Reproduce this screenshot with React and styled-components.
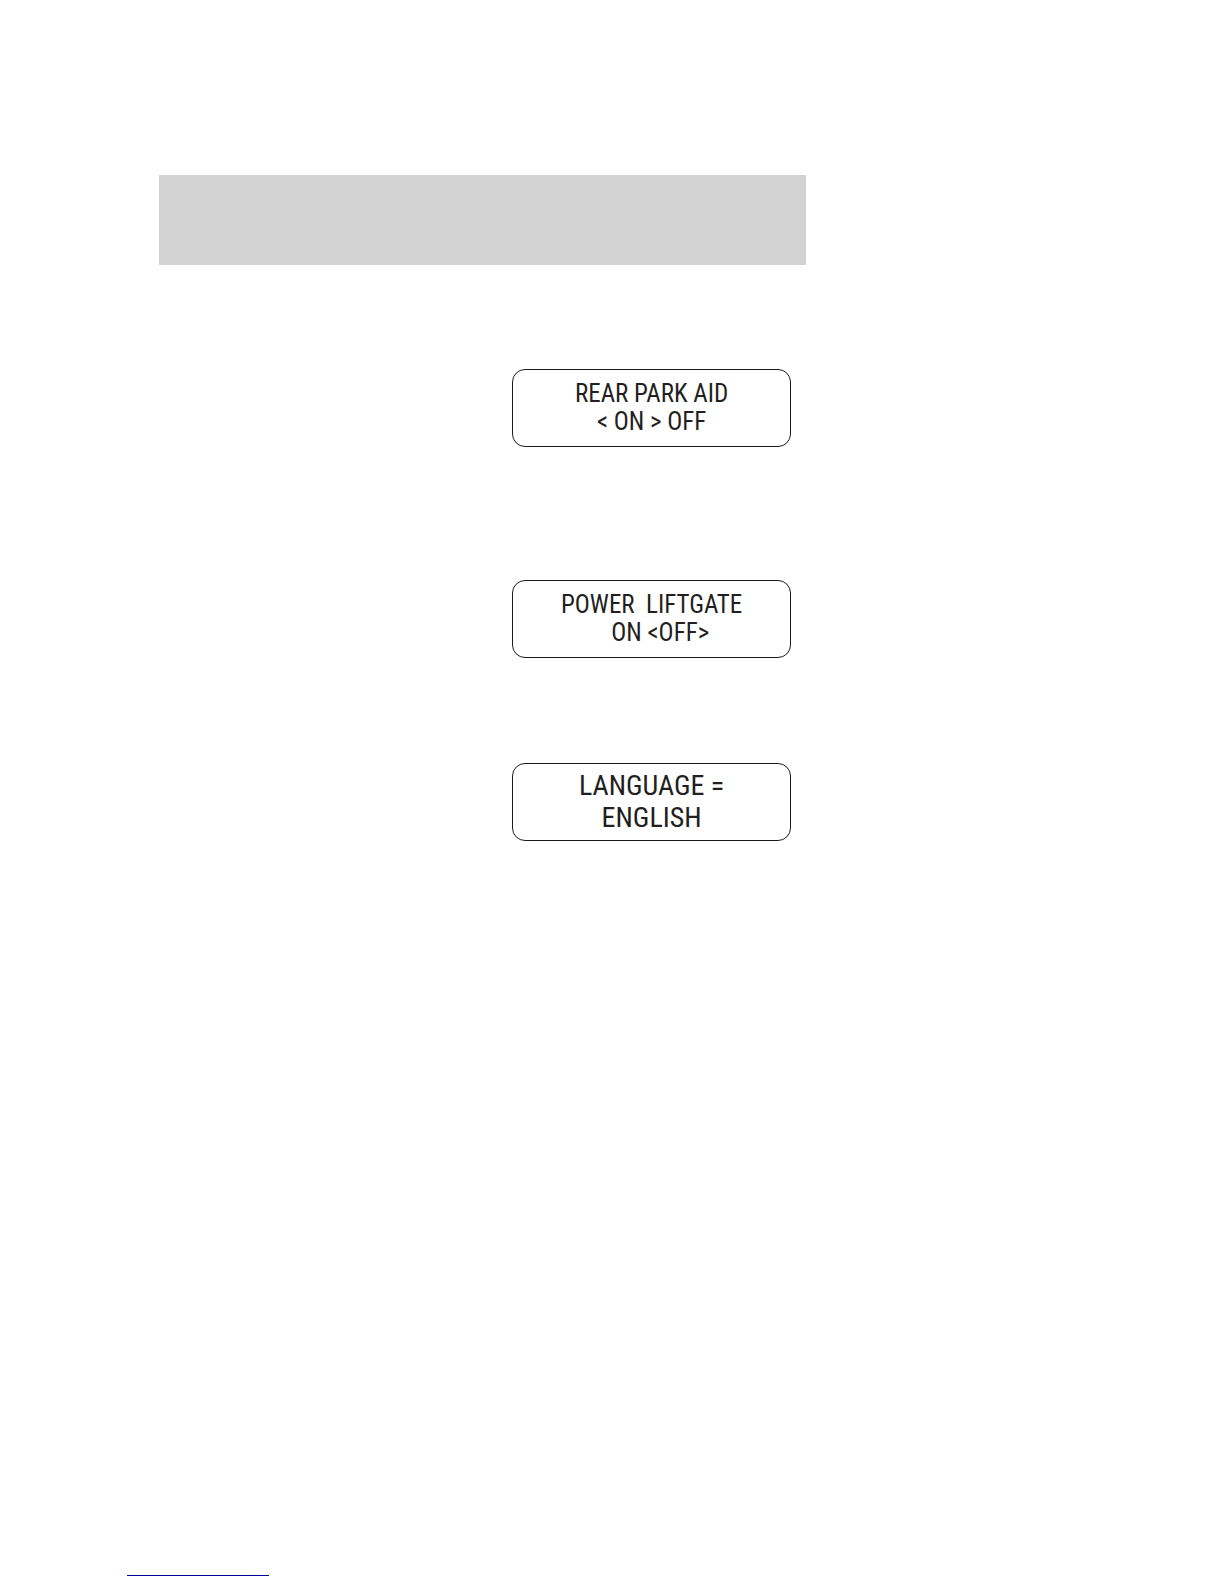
import React from "react";
import styled, { createGlobalStyle } from "styled-components";

const GlobalStyle = createGlobalStyle`
  body {
    margin: 0;
    background: #ffffff;
  }
`;

const Page = styled.main`
  display: flex;
  flex-direction: column;
  box-sizing: border-box;
  min-height: 100vh;
  padding: 175px 13% 8px;
`;

const Column = styled.div`
  display: flex;
  flex-direction: column;
  width: 100%;
  max-width: 647px;
`;

const Banner = styled.header`
  height: 90px;
  margin-bottom: 104px;
  background: #d2d2d2;
`;

const Display = styled.section`
  display: flex;
  flex-direction: column;
  align-items: center;
  justify-content: center;
  align-self: flex-end;
  box-sizing: border-box;
  width: 279px;
  max-width: 100%;
  min-height: 78px;
  margin-right: 15px;
  margin-bottom: ${(props) => props.$after}px;
  border: 1px solid #1a1a1a;
  border-radius: 13px;
`;

const Line = styled.span`
  font-family: "Roboto Condensed", Roboto, sans-serif;
  font-size: ${(props) => (props.$large ? 28 : 25)}px;
  line-height: ${(props) => (props.$large ? 32 : 28)}px;
  color: #231f20;
  white-space: pre;
`;

const Footer = styled.footer`
  margin-top: auto;
  margin-left: -32px;
`;

const Rule = styled.hr`
  width: 142px;
  margin: 0;
  border: 0;
  border-top: 1px solid #000096;
`;

const displays = [
  { lines: ["REAR PARK AID", "< ON > OFF"], after: 133 },
  { lines: ["POWER  LIFTGATE", "   ON <OFF>"], after: 105 },
  { lines: ["LANGUAGE =", "ENGLISH"], after: 0, large: true },
];

const MessageDisplay = ({ lines, after, large }) => (
  <Display $after={after}>
    {lines.map((line) => (
      <Line key={line} $large={large}>
        {line}
      </Line>
    ))}
  </Display>
);

const App = () => {
  return (
    <>
      <GlobalStyle />
      <Page>
        <Column>
          <Banner />
          {displays.map((display) => (
            <MessageDisplay key={display.lines[0]} {...display} />
          ))}
        </Column>
        <Footer>
          <Rule />
        </Footer>
      </Page>
    </>
  );
};

export default App;
